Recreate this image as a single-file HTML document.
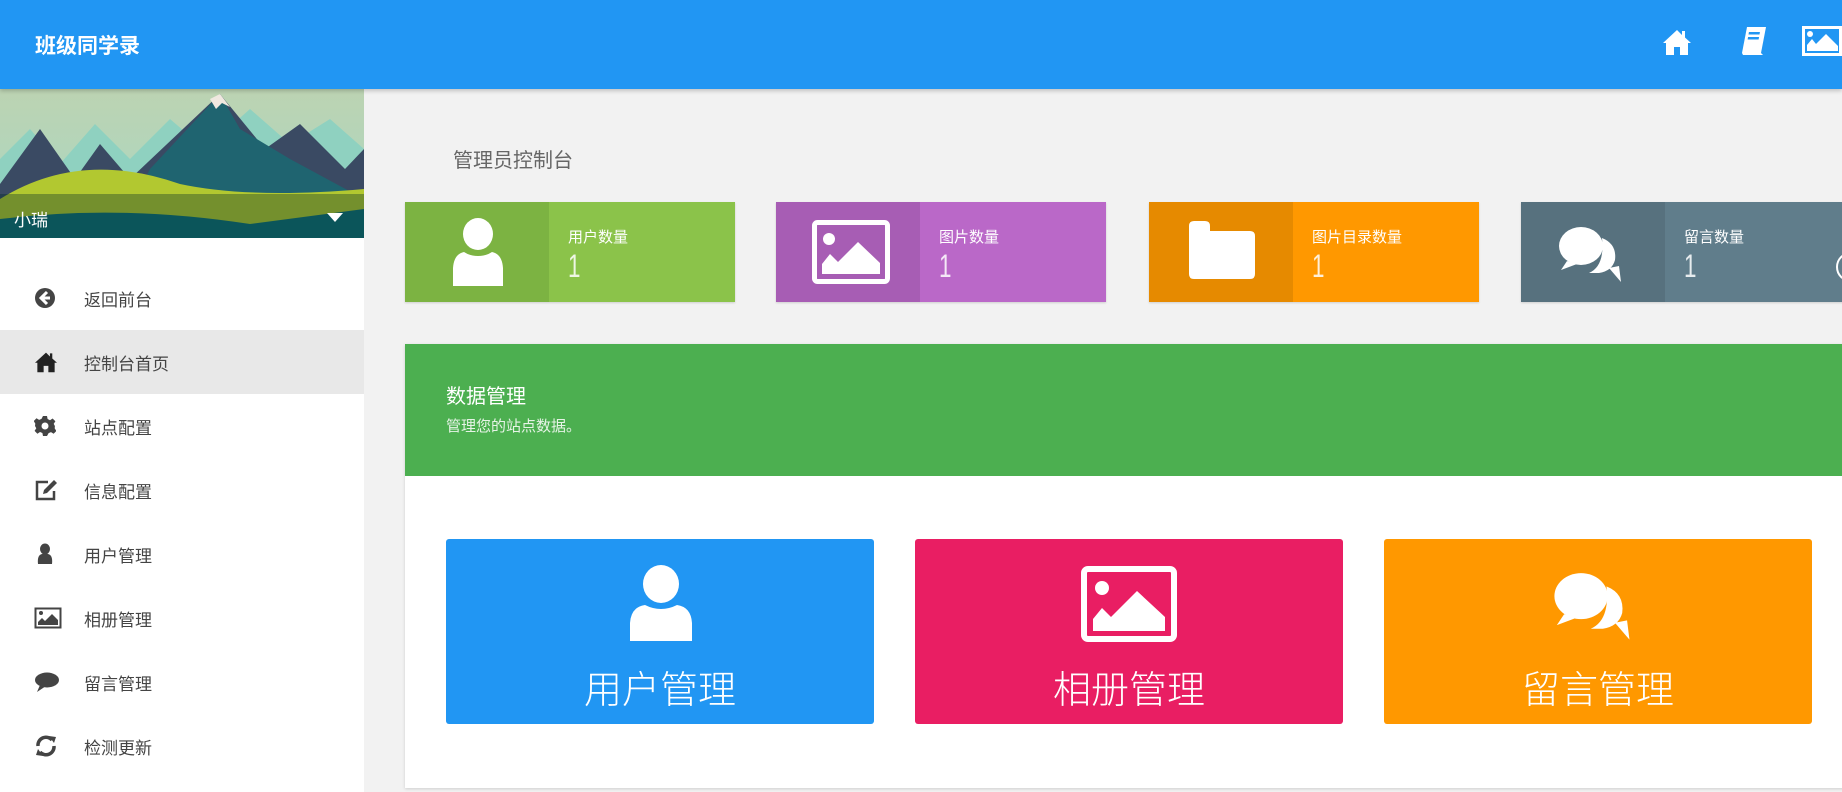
<!DOCTYPE html>
<html><head><meta charset="utf-8"><style>
*{margin:0;padding:0;box-sizing:border-box}
body{width:1842px;height:792px;overflow:hidden;background:#f2f2f2;font-family:"Liberation Sans","Noto Sans CJK SC",sans-serif;position:relative}
.hdr{position:absolute;left:0;top:0;width:1842px;height:89px;background:#2196F3;box-shadow:0 2px 4px rgba(0,0,0,.2);z-index:5}
.hdr .t{position:absolute;left:35px;top:30px;color:#fff;font-size:21px;font-weight:bold}
.side{position:absolute;left:0;top:89px;width:364px;height:703px;background:#fff}
.mi{position:absolute;left:0;width:364px;height:64px;color:#444;font-size:17px}
.mi span{position:absolute;left:84px;top:20px}
.mi svg{position:absolute;left:34px;top:21px}
.card{position:absolute;top:202px;width:330px;height:100px;box-shadow:0 1px 2px rgba(0,0,0,.15)}
.card .ic{position:absolute;left:0;top:0;width:144px;height:100px}
.card .l{position:absolute;left:163px;top:24px;color:#fff;font-size:15px}
.card .n{position:absolute;left:163px;top:46px;color:rgba(255,255,255,.85);font-size:32px;font-weight:300;transform:scaleX(.7);transform-origin:left}
.tile{position:absolute;top:539px;width:428px;height:185px;border-radius:3px}
.tl{position:absolute;width:100%;top:120px;text-align:center;color:#fff;font-size:38px;font-weight:300}
</style></head><body>
<div class="hdr"><div class="t">班级同学录</div>
<svg style="position:absolute;left:1662px;top:28px" width="30" height="28" viewBox="0 0 30 28"><path d="M15 2 L1 15 L4 15 L4 27 L12 27 L12 19 L18 19 L18 27 L26 27 L26 15 L29 15 L23 9.5 L23 3 L20 3 L20 7 Z" fill="#fff"/></svg>
<svg style="position:absolute;left:1740px;top:26px" width="28" height="30" viewBox="0 0 28 30"><path d="M7 1 L26 1 L21 27 L2 27 Z" fill="#fff"/><path d="M2 27 L21 27 L23 29 L3 29Z" fill="#fff"/><rect x="10" y="6" width="11" height="2.5" fill="#2196F3" transform="skewX(-10)"/><rect x="10" y="11" width="11" height="2.5" fill="#2196F3" transform="skewX(-10)"/></svg>
<svg style="position:absolute;left:1802px;top:26px" width="40" height="30" viewBox="0 0 40 30"><rect x="1.5" y="1.5" width="37" height="27" fill="none" stroke="#fff" stroke-width="3"/><circle cx="8" cy="8" r="3" fill="#fff"/><path d="M5 25 L5 19 L10 13 L14 18 L24 8 L36 20 L36 25Z" fill="#fff"/></svg>
</div>
<div class="side">
<svg width="364" height="149" viewBox="0 0 364 149" style="position:absolute;left:0;top:0">
<defs><linearGradient id="sk" x1="0" y1="0" x2="0" y2="1"><stop offset="0" stop-color="#bcd3b2"/><stop offset="1" stop-color="#a8d8c4"/></linearGradient></defs>
<rect width="364" height="149" fill="url(#sk)"/>
<path d="M0 70 L30 40 L60 75 L95 35 L130 70 L170 30 L205 60 L250 20 L290 55 L330 30 L364 60 L364 120 L0 120Z" fill="#8fd1c0"/>
<path d="M0 95 L40 40 L75 90 L100 55 L130 90 L220 5 L265 60 L300 35 L345 80 L364 60 L364 130 L0 130Z" fill="#3a4a63"/>
<path d="M150 80 L220 5 L240 40 L290 70 L364 110 L364 140 L120 140Z" fill="#1f6470"/>
<path d="M0 110 Q80 60 180 95 Q250 110 364 100 L364 149 L0 149Z" fill="#b2c830"/>
<path d="M0 130 Q120 115 250 135 L364 120 L364 149 L0 149Z" fill="#126d76"/>
<path d="M210 10 L220 5 L230 18 L222 14 L216 20Z" fill="#f0e8e0"/>
<rect x="0" y="105" width="364" height="44" fill="rgba(0,40,40,.35)"/>
</svg>
<div style="position:absolute;left:14px;top:117px;color:#fff;font-size:17px">小瑞</div>
<div style="position:absolute;left:327px;top:124px;width:0;height:0;border-left:8px solid transparent;border-right:8px solid transparent;border-top:9px solid #fff"></div>

<div class="mi" style="top:177px"><svg width="22" height="22" viewBox="0 0 22 22"><circle cx="11" cy="11" r="10" fill="#444"/><path d="M13 5 L7 11 L13 17 M7 11 L16 11" stroke="#fff" stroke-width="3" fill="none"/></svg><span>返回前台</span></div>
<div class="mi" style="top:241px;background:#e8e8e8"><svg width="24" height="22" viewBox="0 0 30 28"><path d="M15 2 L1 15 L4 15 L4 27 L12 27 L12 19 L18 19 L18 27 L26 27 L26 15 L29 15 L23 9.5 L23 3 L20 3 L20 7 Z" fill="#222"/></svg><span>控制台首页</span></div>
<div class="mi" style="top:305px"><svg width="22" height="22" viewBox="0 0 22 22"><path d="M9 1h4l.6 3 2.4 1.2 2.6-1.7 2.8 2.8-1.7 2.6L20.9 11h0v0l-.2 2.4 1.7 2.6-2.8 2.8-2.6-1.7-2.4 1L13 21H9l-.6-3-2.4-1-2.6 1.7-2.8-2.8 1.7-2.6L1 11l.3-2.4L-.3 6 2.5 3.2 5.1 4.9 7.5 3.9Z" fill="#444"/><circle cx="11" cy="11" r="3.5" fill="#fff"/></svg><span>站点配置</span></div>
<div class="mi" style="top:369px"><svg width="24" height="22" viewBox="0 0 24 22"><path d="M14 3H3v17h17v-8" stroke="#444" stroke-width="2.5" fill="none"/><path d="M9 15 L10 11 L20 1 L23 4 L13 14Z" fill="#444"/></svg><span>信息配置</span></div>
<div class="mi" style="top:433px"><svg width="22" height="22" viewBox="0 0 22 22"><ellipse cx="11" cy="6" rx="5" ry="5.5" fill="#444"/><path d="M4 21 Q3 12 8 11 L14 11 Q19 12 18 21Z" fill="#444"/></svg><span>用户管理</span></div>
<div class="mi" style="top:497px"><svg width="28" height="22" viewBox="0 0 28 22"><rect x="1.5" y="1.5" width="25" height="19" fill="none" stroke="#444" stroke-width="2"/><circle cx="7" cy="6" r="2" fill="#444"/><path d="M4 18 L4 15 L8 11 L11 14 L18 7 L24 13 L24 18Z" fill="#444"/></svg><span>相册管理</span></div>
<div class="mi" style="top:561px"><svg width="26" height="22" viewBox="0 0 26 22"><ellipse cx="13" cy="9" rx="12" ry="7.5" fill="#444"/><path d="M6 14 L3 21 L12 15Z" fill="#444"/></svg><span>留言管理</span></div>
<div class="mi" style="top:625px"><svg width="24" height="22" viewBox="0 0 24 22"><path d="M4 11 A8 8 0 0 1 18 5" stroke="#444" stroke-width="3.5" fill="none"/><path d="M20 11 A8 8 0 0 1 6 17" stroke="#444" stroke-width="3.5" fill="none"/><path d="M15 1 L22 2 L20 8Z M9 21 L2 20 L4 14Z" fill="#444"/></svg><span>检测更新</span></div>
</div>

<div style="position:absolute;left:453px;top:144px;color:#666;font-size:20px">管理员控制台</div>

<div class="card" style="left:405px;background:#8BC34A"><div class="ic" style="background:#7cb342"><svg style="position:absolute;left:47px;top:16px" width="52" height="68" viewBox="0 0 52 68"><ellipse cx="26" cy="16" rx="15" ry="16" fill="#fff"/><path d="M12 34 Q18 38 26 38 Q34 38 40 34 Q50 36 51 50 L51 68 L1 68 L1 50 Q2 36 12 34Z" fill="#fff"/></svg></div><div class="l">用户数量</div><div class="n">1</div></div>
<div class="card" style="left:776px;background:#BA68C8"><div class="ic" style="background:#a75db4"><svg style="position:absolute;left:36px;top:18px" width="78" height="64" viewBox="0 0 78 64"><rect x="2.5" y="2.5" width="73" height="59" rx="3" fill="none" stroke="#fff" stroke-width="5"/><circle cx="17" cy="19" r="6" fill="#fff"/><path d="M10 54 L10 44 L18 34 L26 42 L46 22 L68 43 L68 54Z" fill="#fff"/></svg></div><div class="l">图片数量</div><div class="n">1</div></div>
<div class="card" style="left:1149px;background:#FF9800"><div class="ic" style="background:#e68a00"><svg style="position:absolute;left:39px;top:18px" width="68" height="60" viewBox="0 0 68 60"><path d="M6 1 L17 1 Q22 1 22 6 L22 11 L62 11 Q67 11 67 16 L67 54 Q67 59 62 59 L6 59 Q1 59 1 54 L1 6 Q1 1 6 1Z" fill="#fff"/></svg></div><div class="l">图片目录数量</div><div class="n">1</div></div>
<div class="card" style="left:1521px;background:#607D8B"><div class="ic" style="background:#57717e"><svg style="position:absolute;left:36px;top:24px" width="76" height="58" viewBox="0 0 76 58"><ellipse cx="24" cy="20" rx="22" ry="19" fill="#fff"/><path d="M10 35 L4 44 L20 38Z" fill="#fff"/><path d="M45 12 Q60 18 58 34 Q55 45 42 47 L32 47 Q48 40 45 12Z" fill="#fff"/><path d="M52 42 L64 56 L62 40Z" fill="#fff"/></svg></div><div class="l">留言数量</div><div class="n">1</div></div>
<div style="position:absolute;left:1836px;top:252px;width:30px;height:30px;border-radius:50%;border:2px solid #fff"></div>

<div style="position:absolute;left:405px;top:344px;width:1440px;height:444px;background:#fff;box-shadow:0 1px 3px rgba(0,0,0,.15)">
<div style="position:absolute;left:0;top:0;width:100%;height:132px;background:#4CAF50"></div>
<div style="position:absolute;left:41px;top:36px;color:#fff;font-size:20px">数据管理</div>
<div style="position:absolute;left:41px;top:71px;color:#e6f3e6;font-size:15px">管理您的站点数据。</div>
</div>

<div class="tile" style="left:446px;background:#2196F3"><svg style="position:absolute;left:183px;top:26px" width="64" height="76" viewBox="0 0 64 76"><ellipse cx="32" cy="19" rx="18" ry="19" fill="#fff"/><path d="M16 40 Q24 44 32 44 Q40 44 48 40 Q62 42 63 58 L63 76 L1 76 L1 58 Q2 42 16 40Z" fill="#fff"/></svg><div class="tl">用户管理</div></div>
<div class="tile" style="left:915px;background:#E91E63"><svg style="position:absolute;left:166px;top:27px" width="96" height="76" viewBox="0 0 96 76"><rect x="3" y="3" width="90" height="70" rx="4" fill="none" stroke="#fff" stroke-width="6"/><circle cx="21" cy="22" r="7" fill="#fff"/><path d="M12 65 L12 53 L21 42 L30 51 L56 25 L84 51 L84 65Z" fill="#fff"/></svg><div class="tl">相册管理</div></div>
<div class="tile" style="left:1384px;background:#FF9800"><svg style="position:absolute;left:168px;top:32px" width="92" height="72" viewBox="0 0 76 58"><ellipse cx="24" cy="20" rx="22" ry="19" fill="#fff"/><path d="M10 35 L4 44 L20 38Z" fill="#fff"/><path d="M45 12 Q60 18 58 34 Q55 45 42 47 L32 47 Q48 40 45 12Z" fill="#fff"/><path d="M52 42 L64 56 L62 40Z" fill="#fff"/></svg><div class="tl">留言管理</div></div>
</body></html>
